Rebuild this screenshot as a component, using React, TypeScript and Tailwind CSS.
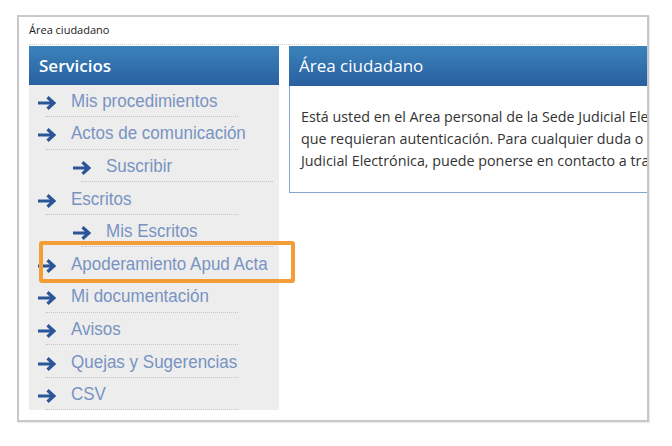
import React from 'react';

type MenuItem = { label: string; sub?: boolean; highlight?: boolean };

const menuItems: MenuItem[] = [
  { label: 'Mis procedimientos' },
  { label: 'Actos de comunicación' },
  { label: 'Suscribir', sub: true },
  { label: 'Escritos' },
  { label: 'Mis Escritos', sub: true },
  { label: 'Apoderamiento Apud Acta', highlight: true },
  { label: 'Mi documentación' },
  { label: 'Avisos' },
  { label: 'Quejas y Sugerencias' },
  { label: 'CSV' },
];

const Arrow: React.FC = () => (
  <svg width="19" height="14" viewBox="0 0 19 14" className="shrink-0 mt-[5px]">
    <path d="M1 7 H16.5 M10.5 1.2 L16.8 7 L10.5 12.8" fill="none" stroke="#2a5599" strokeWidth="3.2" />
  </svg>
);

const SidebarRow: React.FC<{ item: MenuItem }> = ({ item }) => (
  <div className="relative h-[32.6px] flex flex-col">
    <div className={`flex-1 flex items-center gap-[15px] ${item.sub ? 'pl-[43px]' : 'pl-[8px]'}`}>
      <Arrow />
      <span className="inline-block scale-y-110 whitespace-nowrap text-[17px] leading-none text-[#7893c2] font-['Liberation_Sans',Arial,sans-serif]">
        {item.label}
      </span>
    </div>
    <div className={`w-[192px] border-b border-dotted border-[#c4c4c4] ${item.sub ? 'ml-[52px]' : 'ml-[17px]'}`} />

    {/* Highlight frame drawn over the row */}
    {item.highlight && (
      <div className="absolute left-[10px] -top-[6px] w-[256px] h-[42px] border-[4px] border-[#f29d35] rounded-[3px]" />
    )}
  </div>
);

export default function App() {
  return (
    <div className="w-[672px] h-[446px] bg-white pt-[15px] pl-[17px] font-['Open_Sans',sans-serif]">
      <div className="w-[632px] h-[407px] border-2 border-[#c8c8c8] bg-white overflow-hidden px-[10px] shadow-[1px_1px_1px_rgba(0,0,0,0.08)]">
        {/* Breadcrumb */}
        <div className="h-[27px] flex items-center text-[11px] text-[#222]">Área ciudadano</div>

        <div className="border-t border-dotted border-[#cfcfcf] pt-[1px] flex gap-[10px]">
          {/* Sidebar */}
          <div className="w-[250px] shrink-0 bg-[#ededed]">
            <div className="h-[38.5px] flex items-center pl-[10px] bg-gradient-to-b from-[#3c83ba] to-[#295fa0] text-white text-[17px] font-semibold">
              Servicios
            </div>
            {menuItems.map((item) => (
              <SidebarRow key={item.label} item={item} />
            ))}
          </div>

          {/* Content panel */}
          <div className="w-[560px] shrink-0">
            <div className="h-[39.5px] flex items-center pl-[10px] bg-gradient-to-b from-[#3c83ba] to-[#295fa0] text-white text-[17px] font-medium">
              Área ciudadano
            </div>
            <div className="border-x border-b border-[#86a4cc] pl-[11px] py-[20px] text-[14.3px] leading-[22px] text-[#333]">
              <p className="whitespace-nowrap">Está usted en el Area personal de la Sede Judicial Electrónica, donde podrá realizar</p>
              <p className="whitespace-nowrap">que requieran autenticación. Para cualquier duda o aclaración sobre el funcionamiento</p>
              <p className="whitespace-nowrap">Judicial Electrónica, puede ponerse en contacto a través del teléfono</p>
            </div>
          </div>
        </div>
      </div>
    </div>
  );
}
